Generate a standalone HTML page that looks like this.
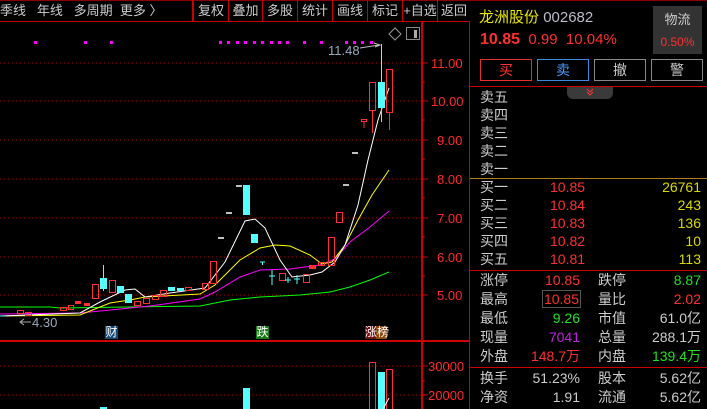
<!DOCTYPE html>
<html><head><meta charset="utf-8"><style>
*{margin:0;padding:0;box-sizing:border-box}
body{width:707px;height:409px;background:#000;overflow:hidden;position:relative;font-family:"Liberation Sans","Noto Sans CJK SC",sans-serif;font-size:13px;color:#ccc}
.a{position:absolute;white-space:nowrap}
.tb{position:absolute;top:0;height:21px;line-height:21px;text-align:center;color:#ccc;font-size:13px;border-left:1px solid #c00}
.r{color:#ff3030}.g{color:#20e020}.y{color:#d8d800}.w{color:#ccc}
.row{position:absolute;left:480px;height:18px;line-height:18px;font-size:14px}
.btn{position:absolute;top:59px;height:22px;line-height:20px;text-align:center;font-size:14px;border:1px solid}
</style></head><body>
<div class="a" style="left:0;top:0;height:21px;line-height:21px;font-size:13px;color:#ccc">季线&nbsp;&nbsp;&nbsp;年线&nbsp;&nbsp;&nbsp;多周期&nbsp;&nbsp;更多 〉</div>
<div class="a" style="left:0;top:21px;width:470px;height:1px;background:#c00"></div>
<div class="a" style="left:0;top:0;width:707px;height:1px;background:#800"></div>
<div class="a" style="left:192px;top:0;width:2px;height:21px;background:#c00"></div>
<div class="tb" style="left:194px;width:34px;border-left:none">复权</div>
<div class="tb" style="left:228px;width:34px">叠加</div>
<div class="tb" style="left:262px;width:35px">多股</div>
<div class="tb" style="left:297px;width:35px">统计</div>
<div class="tb" style="left:332px;width:35px">画线</div>
<div class="tb" style="left:367px;width:35px">标记</div>
<div class="tb" style="left:402px;width:35px">+自选</div>
<div class="tb" style="left:437px;width:33px">返回</div>

<svg class="a" style="left:0;top:22px" width="470" height="387" viewBox="0 22 470 387">
<g stroke="#a00" stroke-dasharray="1,3" stroke-width="1">
<line x1="0" y1="63" x2="421" y2="63"/><line x1="0" y1="101" x2="421" y2="101"/><line x1="0" y1="140" x2="421" y2="140"/>
<line x1="0" y1="179" x2="421" y2="179"/><line x1="0" y1="218" x2="421" y2="218"/><line x1="0" y1="257" x2="421" y2="257"/>
<line x1="0" y1="295" x2="421" y2="295"/><line x1="0" y1="366" x2="421" y2="366"/><line x1="0" y1="395" x2="421" y2="395"/>
</g>
<line x1="422" y1="22" x2="422" y2="409" stroke="#c00" stroke-width="2"/>
<line x1="0" y1="341" x2="470" y2="341" stroke="#c00" stroke-width="2"/>
<line x1="469.5" y1="0" x2="469.5" y2="409" stroke="#c00" stroke-width="1"/>
<g stroke="#c00"><line x1="422" y1="63" x2="428" y2="63"/><line x1="422" y1="101" x2="428" y2="101"/><line x1="422" y1="140" x2="428" y2="140"/><line x1="422" y1="179" x2="428" y2="179"/><line x1="422" y1="218" x2="428" y2="218"/><line x1="422" y1="257" x2="428" y2="257"/><line x1="422" y1="295" x2="428" y2="295"/><line x1="422" y1="366" x2="428" y2="366"/><line x1="422" y1="395" x2="428" y2="395"/>
<line x1="422" y1="82" x2="425" y2="82"/><line x1="422" y1="120" x2="425" y2="120"/><line x1="422" y1="159" x2="425" y2="159"/><line x1="422" y1="198" x2="425" y2="198"/><line x1="422" y1="237" x2="425" y2="237"/><line x1="422" y1="276" x2="425" y2="276"/><line x1="422" y1="381" x2="425" y2="381"/></g>
<g fill="#ff2a2a" font-size="13" font-family="Liberation Sans">
<text x="431" y="68">11.00</text><text x="431" y="106">10.00</text><text x="437" y="145">9.00</text><text x="437" y="184">8.00</text><text x="437" y="223">7.00</text><text x="437" y="262">6.00</text><text x="437" y="300">5.00</text>
<text x="428" y="371">30000</text><text x="428" y="400">20000</text></g>
<g fill="#f0f">
<rect x="34" y="41" width="3" height="3"/><rect x="84" y="41" width="3" height="3"/><rect x="110" y="41" width="3" height="3"/>
<rect x="219" y="41" width="3" height="3"/><rect x="227" y="41" width="3" height="3"/><rect x="236" y="41" width="3" height="3"/><rect x="244" y="41" width="3" height="3"/><rect x="253" y="41" width="3" height="3"/><rect x="261" y="41" width="3" height="3"/><rect x="270" y="41" width="3" height="3"/><rect x="278" y="41" width="3" height="3"/><rect x="286" y="41" width="3" height="3"/><rect x="303" y="41" width="3" height="3"/><rect x="320" y="41" width="3" height="3"/><rect x="345" y="41" width="3" height="3"/><rect x="353" y="41" width="3" height="3"/><rect x="361" y="41" width="3" height="3"/><rect x="370" y="41" width="3" height="3"/></g>
<text x="328" y="55" fill="#9ab" font-size="13">11.48</text>
<path d="M360 48 L379 45 M374 43 L380 45 L375 47" stroke="#bbb" fill="none"/>
<path d="M395 28 L401 34 L395 40 L389 34Z" stroke="#999" fill="none"/>
<rect x="406.5" y="27.5" width="13" height="12" stroke="#888" fill="none"/><rect x="414" y="30" width="3" height="8" fill="#aaa"/>
<polyline fill="none" stroke="#0f0" stroke-width="1" points="0,307 50,307 60,308 200,306 230,300 260,297 300,295 330,292 350,287 370,280 389,272"/>
<polyline fill="none" stroke="#f0f" stroke-width="1" points="0,314 80,313 150,306 200,299 215,292 240,277 260,270 290,269 320,265 335,259 350,242 370,227 389,211"/>
<polyline fill="none" stroke="#ff0" stroke-width="1" points="0,316 80,315 110,303 130,300 145,297 200,294 215,285 240,260 260,248 275,245 290,246 310,255 322,264 332,262 345,245 358,220 372,195 389,170"/>
<polyline fill="none" stroke="#fff" stroke-width="1" points="0,316 80,313 100,302 125,290 135,289 145,297 170,293 205,288 225,262 245,221 255,219 265,228 280,260 292,277 310,275 322,272 335,262 345,245 358,205 368,160 378,120 389,88"/>
<g stroke="#ff3030" fill="none">
<rect x="92.5" y="284.5" width="6" height="14"/><rect x="109.5" y="280.5" width="6" height="12"/>
<rect x="134.5" y="301.5" width="6" height="4"/><rect x="143.5" y="298.5" width="6" height="5"/><rect x="152.5" y="295.5" width="6" height="4"/>
<rect x="202.5" y="283.5" width="6" height="6"/><rect x="210.5" y="261.5" width="6" height="22"/>
<rect x="279.5" y="273.5" width="6" height="7"/><rect x="303.5" y="274.5" width="6" height="8"/>
<rect x="328.5" y="237.5" width="6" height="28"/><rect x="336.5" y="212.5" width="6" height="10"/>
<rect x="369.5" y="82.5" width="6" height="28"/><line x1="372.5" y1="110" x2="372.5" y2="133"/>
<rect x="361.5" y="119.5" width="5" height="2"/><line x1="364" y1="121" x2="364" y2="128"/>
<rect x="386.5" y="69.5" width="6" height="43"/><line x1="389.5" y1="112" x2="389.5" y2="130"/>
<rect x="68.5" y="305.5" width="5" height="4"/><rect x="60.5" y="307.5" width="6" height="3"/><rect x="17.5" y="310.5" width="6" height="3"/><rect x="25.5" y="312.5" width="6" height="3"/>
<rect x="160.5" y="290.5" width="6" height="6"/><rect x="185.5" y="287.5" width="6" height="3"/>
<rect x="309.5" y="265.5" width="6" height="3"/><rect x="318.5" y="262.5" width="6" height="3"/>
</g>
<g fill="#ff3030"><rect x="75" y="301" width="6" height="3"/><rect x="84" y="303" width="6" height="3"/><rect x="310" y="266" width="6" height="2"/></g>
<g fill="#5ff" stroke="#5ff">
<rect x="100.5" y="278.5" width="6" height="10"/><line x1="103.5" y1="265" x2="103.5" y2="291"/>
<rect x="117.5" y="286.5" width="6" height="6"/><rect x="125.5" y="294.5" width="6" height="8"/>
<rect x="168.5" y="287.5" width="6" height="3"/><rect x="177.5" y="288.5" width="6" height="2"/>
<rect x="243.5" y="185.5" width="6" height="29"/><rect x="251.5" y="234.5" width="6" height="8"/>
<line x1="260" y1="262" x2="265" y2="262"/><line x1="262.5" y1="262" x2="262.5" y2="265"/>
<line x1="269" y1="276" x2="275" y2="276"/><line x1="272" y1="270" x2="272" y2="285"/>
<line x1="285" y1="280" x2="291" y2="280"/><line x1="288" y1="277" x2="288" y2="283"/>
<line x1="294" y1="279" x2="300" y2="279"/><line x1="297" y1="275" x2="297" y2="284"/>
<rect x="378.5" y="82.5" width="6" height="25"/><line x1="381.5" y1="44" x2="381.5" y2="122"/>
<line x1="0" y1="316" x2="6" y2="316"/>
</g>
<g stroke="#fff" stroke-width="1.5"><line x1="352" y1="153" x2="358" y2="153"/><line x1="343" y1="185" x2="349" y2="185"/><line x1="236" y1="186" x2="242" y2="186"/><line x1="226" y1="213" x2="232" y2="213"/><line x1="218" y1="238" x2="224" y2="238"/></g>
<text x="32" y="327" fill="#9ab" font-size="13">4.30</text>
<path d="M21 322 L31 322 M24 319 L20 322 L24 325" stroke="#aaa" fill="none"/>
<g fill="#5ff"><rect x="100" y="407" width="7" height="2"/><rect x="243" y="388" width="7" height="21"/><rect x="378" y="372" width="7" height="37"/></g>
<g fill="none" stroke="#ff3030"><rect x="369.5" y="362.5" width="6" height="47"/><rect x="386.5" y="369.5" width="6" height="40"/></g>
<line x1="383" y1="409" x2="389" y2="398" stroke="#fff"/>
</svg>
<div class="a" style="left:105px;top:326px;width:13px;height:13px;background:#134a78;color:#fff;font-size:12px;line-height:13px;text-align:center">财</div>
<div class="a" style="left:256px;top:326px;width:13px;height:13px;background:#1a7a1a;color:#fff;font-size:12px;line-height:13px;text-align:center">跌</div>
<div class="a" style="left:365px;top:326px;width:22px;height:13px;background:linear-gradient(90deg,#701010 50%,#8a4a10 50%);color:#fff;font-size:12px;line-height:13px;text-align:center">涨榜</div>

<div class="a" style="left:479px;top:6px;font-size:15px"><span style="color:#e8e800">龙洲股份</span> <span style="color:#bbc">002682</span></div>
<div class="a" style="left:480px;top:31px;font-size:15px;color:#ff3030"><b style="font-size:16px">10.85</b>&nbsp; 0.99&nbsp; 10.04%</div>
<div class="a" style="left:653px;top:6px;width:49px;height:48px;background:#333;text-align:center;font-size:13px;line-height:22px"><div style="margin-top:3px;color:#ccc">物流</div><div style="color:#ff3030;font-size:12px">0.50%</div></div>
<div class="btn" style="left:480px;width:52px;border-color:#e03030;color:#ff3030">买</div>
<div class="btn" style="left:537px;width:52px;border-color:#3a8ae0;color:#4a9aff">卖</div>
<div class="btn" style="left:594px;width:52px;border-color:#888;color:#ccc">撤</div>
<div class="btn" style="left:651px;width:52px;border-color:#888;color:#ccc">警</div>
<div class="a" style="left:470px;top:86px;width:237px;height:1px;background:#c00"></div>
<div class="a" style="left:567px;top:87px;width:46px;height:12px;background:#3a3a3a;border-radius:0 0 6px 6px"><svg width="46" height="12"><path d="M20 2 L23 5 L26 2 M20 5 L23 8 L26 5" stroke="#f33" fill="none"/></svg></div>
<div class="row" style="top:88px">卖五</div><div class="row" style="top:106px">卖四</div><div class="row" style="top:124px">卖三</div><div class="row" style="top:142px">卖二</div><div class="row" style="top:160px">卖一</div>
<div class="a" style="left:470px;top:178px;width:237px;height:1px;background:#b08020"></div>
<div class="row" style="top:178px">买一</div><div class="row" style="top:196px">买二</div><div class="row" style="top:214px">买三</div><div class="row" style="top:232px">买四</div><div class="row" style="top:250px">买五</div>
<div class="a r" style="left:550px;top:178px;line-height:18px;font-size:14px">10.85<br>10.84<br>10.83<br>10.82<br>10.81</div>
<div class="a y" style="right:6px;top:178px;line-height:18px;font-size:14px;text-align:right">26761<br>243<br>136<br>10<br>113</div>
<div class="a" style="left:470px;top:270px;width:237px;height:1px;background:#c00"></div>
<div class="a" style="left:480px;top:271px;line-height:19px;font-size:14px">涨停<br>最高<br>最低<br>现量<br>外盘</div>
<div class="a" style="right:127px;top:271px;line-height:19px;font-size:14px;text-align:right"><span class="r">10.85</span><br><span class="r" style="outline:1px solid #555;padding:0 1px">10.85</span><br><span class="g">9.26</span><br><span style="color:#c020e0">7041</span><br><span class="r">148.7万</span></div>
<div class="a" style="left:598px;top:271px;line-height:19px;font-size:14px">跌停<br>量比<br>市值<br>总量<br>内盘</div>
<div class="a" style="right:6px;top:271px;line-height:19px;font-size:14px;text-align:right"><span class="g">8.87</span><br><span class="r">2.02</span><br>61.0亿<br>288.1万<br><span class="g">139.4万</span></div>
<div class="a" style="left:470px;top:367px;width:237px;height:1px;background:#c00"></div>
<div class="a" style="left:480px;top:369px;line-height:19px;font-size:14px">换手<br>净资</div>
<div class="a" style="right:127px;top:369px;line-height:19px;font-size:14px;text-align:right">51.23%<br>1.91</div>
<div class="a" style="left:598px;top:369px;line-height:19px;font-size:14px">股本<br>流通</div>
<div class="a" style="right:6px;top:369px;line-height:19px;font-size:14px;text-align:right">5.62亿<br>5.62亿</div>
</body></html>
